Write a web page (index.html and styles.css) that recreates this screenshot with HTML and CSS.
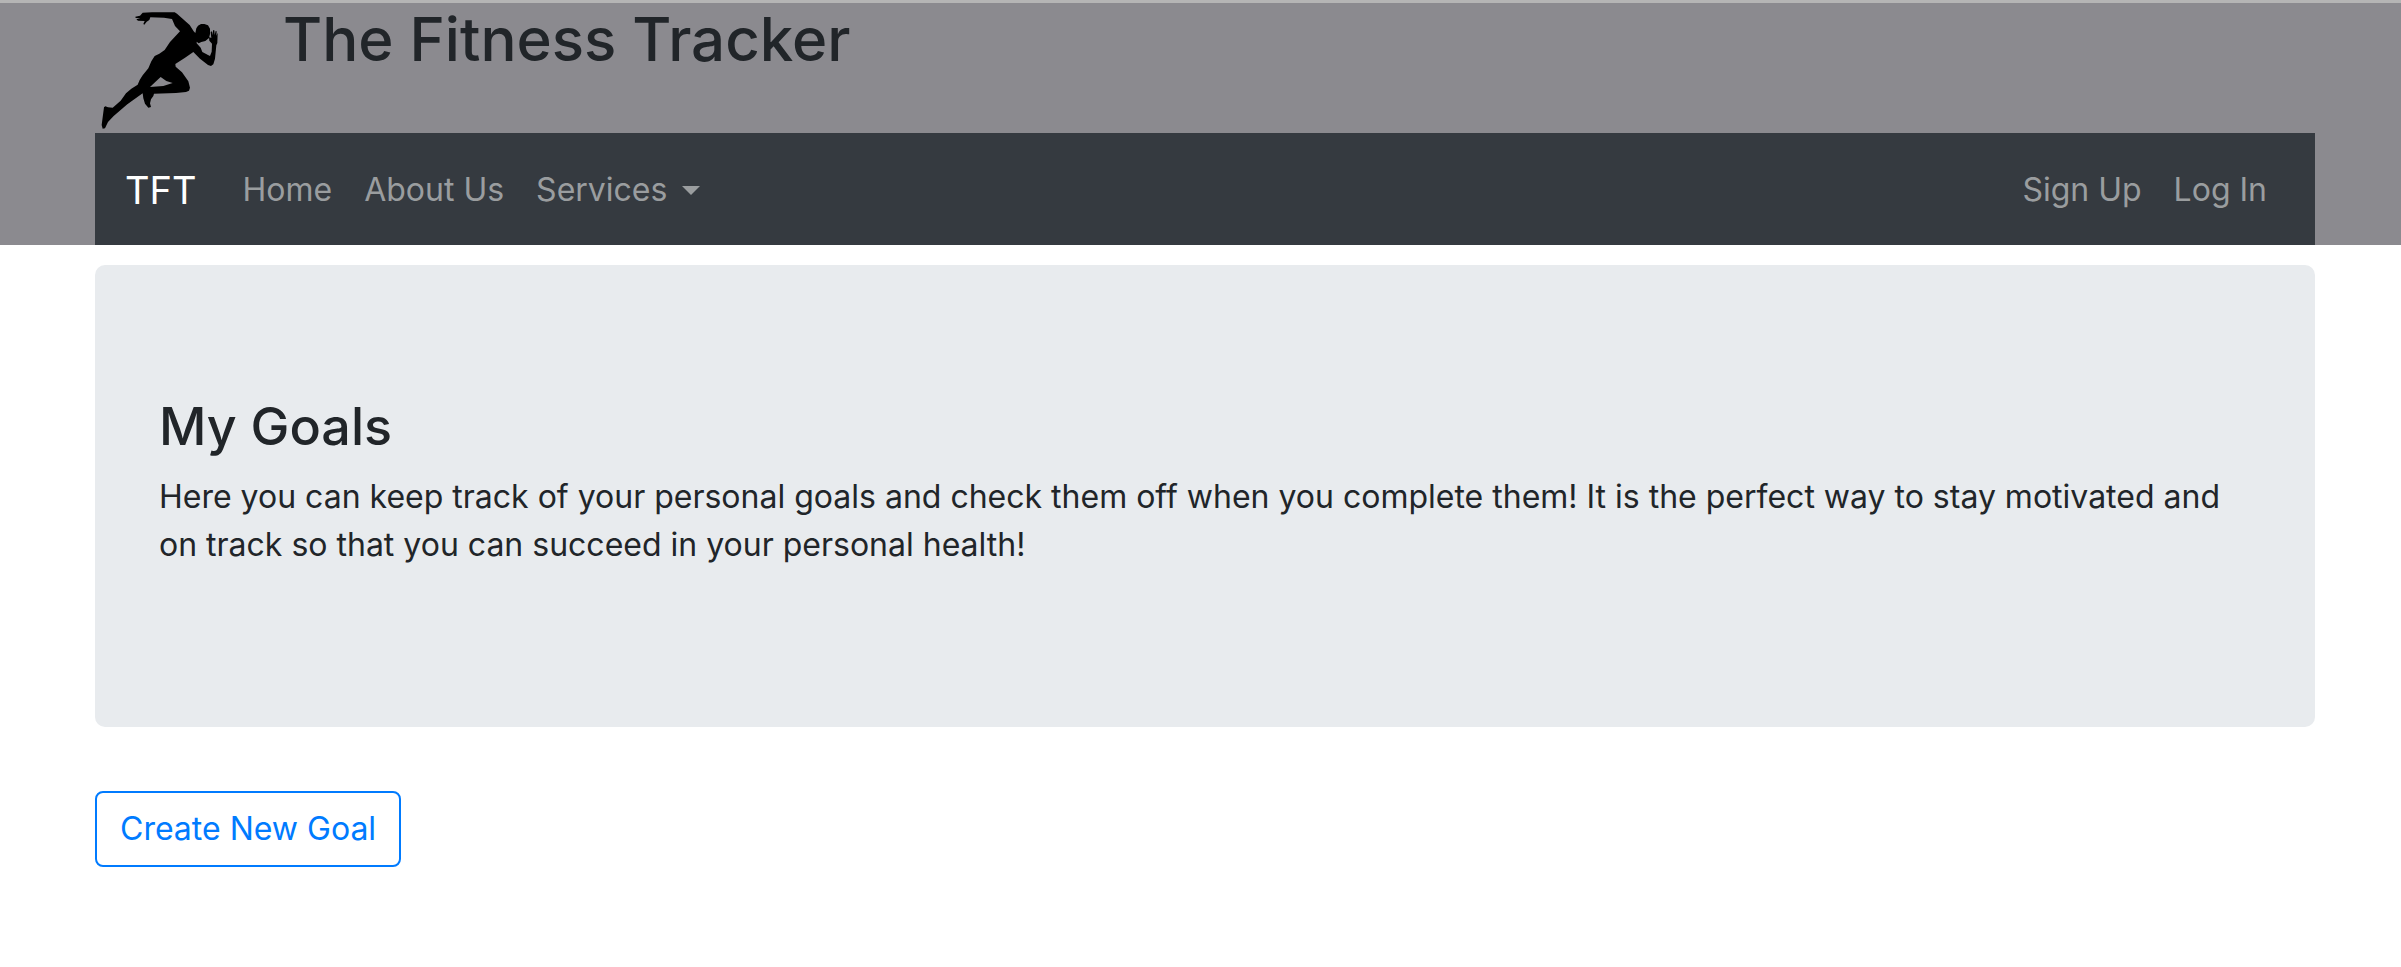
FILE: index.html
```html
<!DOCTYPE html>
<html lang="en">
<head>
<meta charset="utf-8">
<title>The Fitness Tracker</title>
<link rel="stylesheet" href="styles.css">
</head>
<body>
<header class="site-header">
  <div class="brand-row">
    <svg class="logo" viewBox="45 9 390 390" role="img" aria-label="Runner">
      <path d="M216 37 L284 37 L291 41 L329 75 L341 94 L346 99 L349 85 L354 77 L363 72 L373 72 L384 76 L390 86 L390 102 L387 114 L376 123 L364 126 L356 130 L350 125 L350 130 L362 143 L367 156 L384 165 L390 168 L395 155 L396 131 L388 122 L387 111 L394 114 L392 96 L396 94 L399 106 L399 91 L403 91 L404 105 L407 93 L410 94 L409 107 L413 98 L412 129 L409 136 L405 176 L400 193 L393 198 L384 195 L360 176 L340 156 L314 174 L286 192 L287 200 L306 217 L325 244 L330 263 L327 272 L318 276 L288 279 L222 281 L220 288 L213 298 L210 310 L213 321 L205 323 L195 311 L190 295 L188 280 L142 313 L101 348 L84 366 L75 385 L68 386 L65 375 L69 344 L72 322 L76 319 L84 322 L98 323 L122 302 L138 280 L154 266 L173 254 L179 240 L188 226 L205 205 L214 184 L224 168 L238 161 L254 150 L270 126 L300 94 L285 78 L276 57 L252 53 L211 52 L208 60 L200 65 L193 74 L190 72 L194 63 L174 62 L169 58 L181 55 L167 54 L166 50 L180 47 L188 38Z M242 231 L229 243 L210 261 L250 258 L278 249 L259 243Z" fill="#000" fill-rule="evenodd"/>
    </svg>
    <h1 class="site-title">The Fitness Tracker</h1>
  </div>
  <nav class="navbar">
    <a class="nav-brand" href="#">TFT</a>
    <a class="nav-link" href="#">Home</a>
    <a class="nav-link" href="#">About Us</a>
    <a class="nav-link dropdown" href="#">Services</a>
    <div class="nav-end">
      <a class="nav-link" href="#">Sign Up</a>
      <a class="nav-link" href="#">Log In</a>
    </div>
  </nav>
</header>
<main class="content">
  <section class="jumbotron">
    <h2 class="jumbotron-title">My Goals</h2>
    <p class="jumbotron-text">Here you can keep track of your personal goals and check them off when you complete them! It is the perfect way to stay motivated and on track so that you can succeed in your personal health!</p>
  </section>
  <button class="btn-outline" type="button">Create New Goal</button>
</main>
</body>
</html>
```

FILE: styles.css
```css
* { box-sizing: border-box; }
body {
  margin: 0;
  background: #fff;
  color: #212529;
  font: 400 32px/48px Inter, "Liberation Sans", sans-serif;
}
h1, h2, p { margin: 0; }
.site-header {
  padding: 0 86px 0 95px;
  border-top: 3px solid #b5b5b5;
  background: #8b8a8f;
}
.brand-row {
  display: flex;
  align-items: flex-start;
  gap: 58px;
}
.logo { width: 130px; height: 130px; }
.site-title { font-size: 60px; line-height: 72px; font-weight: 500; }
.navbar {
  display: flex;
  align-items: center;
  gap: 32px;
  height: 112px;
  padding: 2px 48px 0 30px;
  background: #353a40;
}
.navbar a { text-decoration: none; }
.nav-brand { margin-right: 14px; color: #fff; font-size: 38px; }
.nav-link { color: #9a9d9f; }
.dropdown { display: flex; align-items: center; gap: 15px; }
.dropdown::after {
  content: "";
  border: 9px solid transparent;
  border-top-color: currentColor;
  border-bottom: 0;
}
.nav-end { display: flex; gap: 32px; margin-left: auto; }
.content { padding: 20px 86px 64px 95px; }
.jumbotron {
  margin-bottom: 64px;
  padding: 128px 64px 158px;
  border-radius: 10px;
  background: #e8ebee;
}
.jumbotron-title {
  margin-bottom: 12px;
  font-size: 52px;
  line-height: 68px;
  font-weight: 500;
}
.btn-outline {
  padding: 12px 23px;
  border: 2px solid #007bff;
  border-radius: 8px;
  background: transparent;
  color: #007bff;
  font: inherit;
}
```
